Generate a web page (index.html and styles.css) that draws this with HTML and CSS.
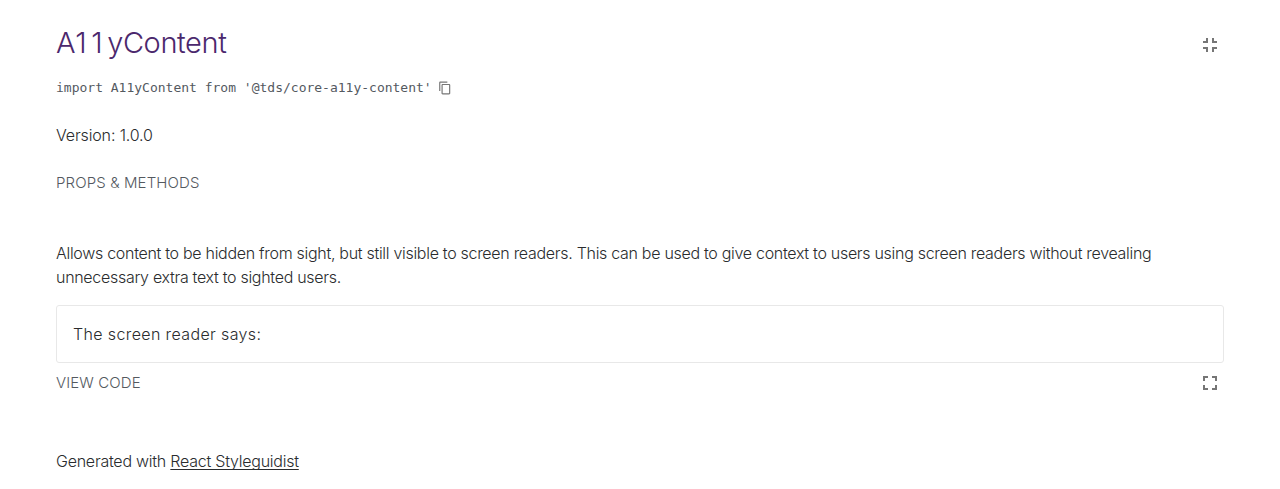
FILE: index.html
```html
<!DOCTYPE html>
<html lang="en">
<head>
<meta charset="utf-8">
<title>A11yContent</title>
<link rel="stylesheet" href="styles.css">
</head>
<body>
<main class="page">
  <header class="header">
    <h1 class="title">A<span class="digits">11</span>yContent</h1>
    <button class="icon-button" aria-label="Show all components"><svg class="icon" viewBox="0 0 24 24"><path d="M5 16h3v3h2v-5H5v2zm3-8H5v2h5V5H8v3zm6 11h2v-3h3v-2h-5v5zm2-11V5h-2v5h5V8h-3z"/></svg></button>
  </header>
  <div class="import"><code class="code">import A11yContent from '@tds/core-a11y-content'</code><svg class="copy" viewBox="0 0 24 24"><path d="M16 1H4c-1.1 0-2 .9-2 2v14h2V3h12V1zm3 4H8c-1.1 0-2 .9-2 2v14c0 1.100.9 2 2 2h11c1.100 0 2-.9 2-2V7c0-1.100-.9-2-2-2zm0 16H8V7h11v14z"/></svg></div>
  <p class="version">Version: 1.0.0</p>
  <button class="tab props">Props &amp; methods</button>
  <p class="description"><span class="line-one">Allows content to be hidden from sight, but still visible to screen readers. This can be used to give context to users using screen readers without revealing</span><br><span class="line-two">unnecessary extra text to sighted users.</span></p>
  <div class="preview">The screen reader says:</div>
  <div class="toolbar"><button class="tab view">View code</button><button class="icon-button" aria-label="Open isolated"><svg class="icon" viewBox="0 0 24 24"><path d="M7 14H5v5h5v-2H7v-3zm-2-4h2V7h3V5H5v5zm12 7h-3v2h5v-5h-2v3zM14 5v2h3v3h2V5h-5z"/></svg></button></div>
  <footer class="footer"><span class="generated">Generated with</span> <a class="link" href="#">React Styleguidist</a></footer>
</main>
</body>
</html>
```
FILE: styles.css
```css
body { margin: 0; background: #fff; color: #2a2c2e; font: 300 16px/24px Inter, sans-serif; letter-spacing: -0.295px; }
.page { padding: 24px 56px 0; }
h1, p { margin: 0; }
button { border: 0; padding: 0; background: none; font: inherit; letter-spacing: inherit; }
.header { display: flex; justify-content: space-between; height: 42px; }
.title { color: #4b286d; font-size: 29px; line-height: 38px; font-weight: 300; letter-spacing: -0.4px; }
.digits { letter-spacing: 4.6px; }
.icon-button { width: 28px; height: 42px; display: grid; place-items: center; color: #767676; }
.icon { width: 24px; height: 24px; fill: currentColor; }
.import { display: flex; align-items: center; height: 24px; margin-top: 10px; gap: 6px; color: #54595f; }
.code { font: 13px/24px "DejaVu Sans Mono", monospace; letter-spacing: 0; }
.copy { width: 14px; height: 14px; fill: #767676; }
.version { margin-top: 23px; letter-spacing: -0.14px; }
.tab { display: block; height: 24px; color: #54595f; font-size: 15px; line-height: 24px; text-transform: uppercase; letter-spacing: 0.12px; }
.props { margin-top: 24px; }
.description { margin-top: 46px; white-space: nowrap; }
.preview { height: 56px; margin-top: 16px; padding-left: 16px; border: 1px solid #e8e8e8; border-radius: 3px; line-height: 57px; letter-spacing: 0.37px; }
.toolbar { display: flex; justify-content: space-between; align-items: center; height: 40px; }
.footer { margin-top: 46px; letter-spacing: -0.24px; }
.link { color: inherit; text-underline-offset: 2px; text-decoration-skip-ink: none; }
```
